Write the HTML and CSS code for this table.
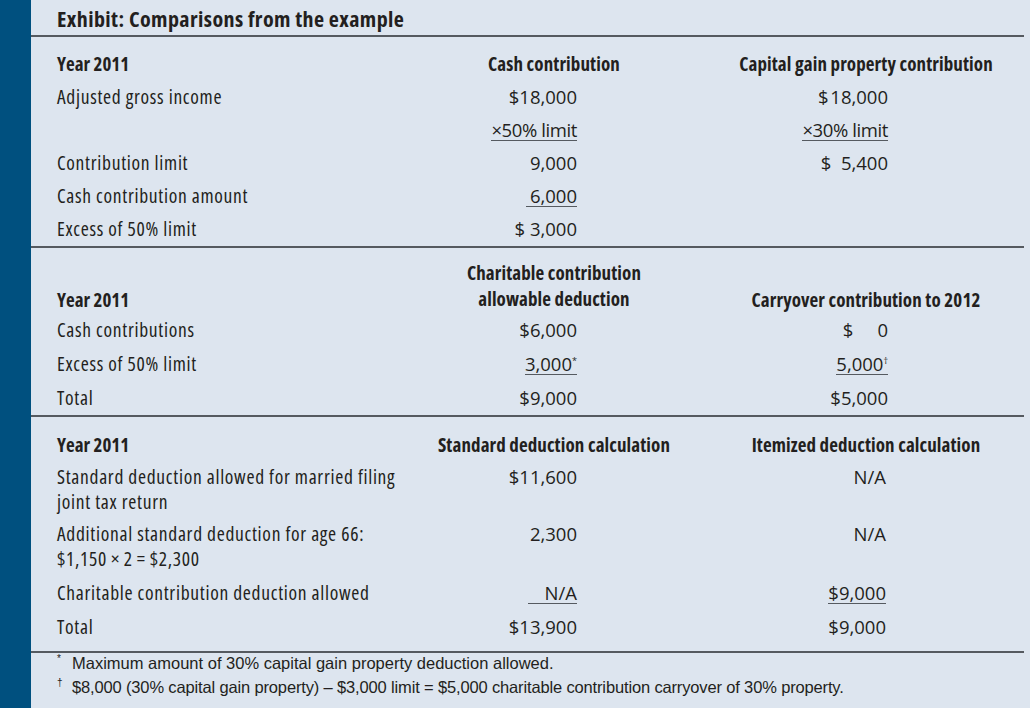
FILE: index.html
```html
<!DOCTYPE html>
<html lang="en">
<head>
<meta charset="utf-8">
<title>Exhibit: Comparisons from the example</title>
<link rel="stylesheet" href="styles.css">
</head>
<body>
<div class="page">
  <div class="bar"></div>
  <div class="main">
    <div class="title">Exhibit: Comparisons from the example</div>

    <div class="section s1">
      <div class="lbl hd">Year 2011</div>
      <div class="ch">Cash contribution</div>
      <div class="ch">Capital gain property contribution</div>

      <div class="lbl">Adjusted gross income</div>
      <div class="v2">$18,000</div>
      <div class="v3">$&#8202;18,000</div>

      <div class="lbl"></div>
      <div class="v2"><span class="ul lim">×50% limit</span></div>
      <div class="v3"><span class="ul lim">×30% limit</span></div>

      <div class="lbl">Contribution limit</div>
      <div class="v2">9,000</div>
      <div class="v3"><span class="pre">$  5,400</span></div>

      <div class="lbl">Cash contribution amount</div>
      <div class="v2"><span class="ul pad4">6,000</span></div>
      <div class="v3"></div>

      <div class="lbl">Excess of 50% limit</div>
      <div class="v2"><span class="pre">$ 3,000</span></div>
      <div class="v3"></div>
    </div>

    <div class="section s2">
      <div class="lbl hd bot">Year 2011</div>
      <div class="ch two">Charitable contribution<br>allowable deduction</div>
      <div class="ch bot">Carryover contribution to 2012</div>

      <div class="lbl">Cash contributions</div>
      <div class="v2">$6,000</div>
      <div class="v3"><span class="pre">$     0</span></div>

      <div class="lbl">Excess of 50% limit</div>
      <div class="v2"><span class="ul">3,000<sup>*</sup></span></div>
      <div class="v3"><span class="ul">5,000<sup>†</sup></span></div>

      <div class="lbl">Total</div>
      <div class="v2">$9,000</div>
      <div class="v3">$5,000</div>
    </div>

    <div class="section s3">
      <div class="lbl hd">Year 2011</div>
      <div class="ch">Standard deduction calculation</div>
      <div class="ch">Itemized deduction calculation</div>

      <div class="lbl w1">Standard deduction allowed for married filing<br>joint tax return</div>
      <div class="v2 w1">$11,600</div>
      <div class="v3 w1">N/A</div>

      <div class="lbl w2">Additional standard deduction for age 66:<br>$1,150&#8201;×&#8201;2&#8201;=&#8201;$2,300</div>
      <div class="v2 w2">2,300</div>
      <div class="v3 w2">N/A</div>

      <div class="lbl">Charitable contribution deduction allowed</div>
      <div class="v2"><span class="ul pad17">N/A</span></div>
      <div class="v3"><span class="ul">$9,000</span></div>

      <div class="lbl">Total</div>
      <div class="v2">$13,900</div>
      <div class="v3">$9,000</div>
    </div>

    <div class="notes">
      <div class="note"><span class="mark">*</span>Maximum amount of 30% capital gain property deduction allowed.</div>
      <div class="note tight"><span class="mark">†</span>$8,000 (30% capital gain property) – $3,000 limit = $5,000 charitable contribution carryover of 30% property.</div>
    </div>
  </div>
</div>
</body>
</html>
```

FILE: styles.css
```css
html, body {
  margin: 0;
  padding: 0;
  background: #dde5ef;
}
body {
  width: 1030px;
  height: 708px;
  overflow: hidden;
  color: #231f20;
  font-family: "Open Sans", "DejaVu Sans Condensed", sans-serif;
  font-stretch: 75%;
}
.page {
  display: flex;
  height: 708px;
}
.bar {
  width: 31px;
  flex: none;
  background: #00507f;
}
.main {
  width: 993px;
  flex: none;
}
.title {
  height: 37px;
  box-sizing: border-box;
  padding: 5px 0 0 26px;
  font-size: 22px;
  font-weight: bold;
  letter-spacing: 0.4px;
  line-height: 27px;
  border-bottom: 2px solid #555a60;
}
.section {
  display: grid;
  grid-template-columns: 315px 260px 260px;
  column-gap: 52px;
  padding-left: 26px;
  border-bottom: 2px solid #555a60;
  font-size: 18.5px;
  line-height: 24px;
}
.section > div {
  padding: 4.5px 0;
  min-height: 24px;
  white-space: nowrap;
}
.s1 { padding-top: 10px; padding-bottom: 1px; }
.s2 { padding-top: 7px; padding-bottom: 0; }
.s2 > div { padding: 5px 0; }
.s2 > .two { padding: 5px 0 1px; line-height: 26px; }
.s2 > .bot { padding: 5px 0 1px; }
.s3 { padding-top: 11px; padding-bottom: 7px; }
.s3 > div { padding: 5px 0; }
.s3 > .w1 { padding: 2px 0 4px; line-height: 25px; }
.s3 > .w2 { padding: 3px 0 5px; line-height: 25px; }
.lbl {
  font-size: 19.5px;
  letter-spacing: 0.7px;
}
.hd, .ch {
  font-weight: bold;
  font-size: 19px;
  letter-spacing: 0.1px;
}
.hd {
  letter-spacing: 0;
}
.ch {
  text-align: center;
}
.bot {
  align-self: end;
}
.v2, .v3 {
  text-align: right;
  font-stretch: 92%;
}
.section > .v2 { padding-right: 107px; }
.section > .v3 { padding-right: 108px; }
.s3 > .v3 { padding-right: 110px; }
.pre { white-space: pre; }
.ul {
  display: inline-block;
  line-height: 20px;
  border-bottom: 1.5px solid #555a60;
  white-space: pre;
}
.lim {
  letter-spacing: -0.4px;
}
.pad4 { padding-left: 4px; }
.pad17 { padding-left: 17px; }
sup {
  font-size: 9px;
  line-height: 0;
  vertical-align: 7px;
}
.notes {
  margin-top: -2px;
  padding: 0 0 0 26px;
  font-family: "Liberation Sans", Arial, sans-serif;
  font-stretch: normal;
  font-size: 16.5px;
  line-height: 24px;
}
.note {
  display: flex;
}
.tight {
  letter-spacing: -0.15px;
}
.mark {
  width: 15px;
  flex: none;
  font-size: 10px;
  line-height: 16px;
}
```
